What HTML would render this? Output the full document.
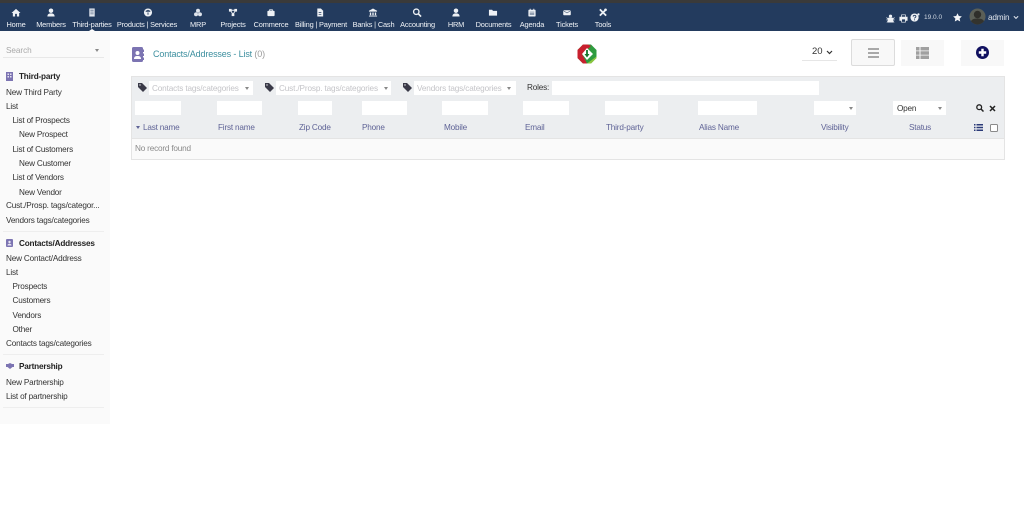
<!DOCTYPE html>
<html><head><meta charset="utf-8"><style>
*{box-sizing:border-box}
html,body{margin:0;padding:0;width:1024px;height:514px;overflow:hidden;background:#fff;font-family:"Liberation Sans",sans-serif;color:#333}
body{filter:blur(.3px)}
.a{position:absolute;white-space:nowrap}
#strip{position:absolute;left:0;top:0;width:1024px;height:3px;background:#3a3a3a}
#bar{position:absolute;left:0;top:3px;width:1024px;height:28px;background:#233b5e}
.n{position:absolute;top:20px;font-size:7.4px;letter-spacing:-.17px;line-height:9px;color:#f0f3f7;transform:translateX(-50%);white-space:nowrap}
.i{position:absolute;top:7.500px;width:9px;height:9px;transform:translateX(-50%);overflow:visible}
#side{position:absolute;left:0;top:31px;width:110px;height:393px;background:#fafafa}
.s{position:absolute;margin-top:1px;font-size:8.2px;letter-spacing:-.19px;line-height:10px;color:#333;white-space:nowrap}
.h{font-weight:bold;color:#222;left:19px}
.hr{position:absolute;left:3px;width:101px;height:1px;background:#eee}
.f{position:absolute;background:#fff}
.th{position:absolute;top:123px;font-size:8.2px;letter-spacing:-.19px;line-height:10px;color:#5f6396;white-space:nowrap}
.ph{position:absolute;margin-top:1px;font-size:8.2px;letter-spacing:-.14px;line-height:10px;color:#c4c4c8;white-space:nowrap}
.tri{position:absolute;width:0;height:0;border-left:2.5px solid transparent;border-right:2.5px solid transparent;border-top:3px solid #888}
</style></head><body>
<div id="strip"></div><div id="bar"></div>

<svg class="i" style="left:16px" viewBox="0 0 10 10"><path d="M5 1L0 5.500h1.500V9.500h2.500V6.500h2V9.500h2.500V5.500H10z" fill="#eef1f5"/></svg>
<svg class="i" style="left:51px" viewBox="0 0 10 10"><circle cx="5" cy="3" r="2.500" fill="#eef1f5"/><path d="M1 9.500C1 6.500 3 6 5 6s4 .5 4 3.500z" fill="#eef1f5"/></svg>
<svg class="i" style="left:92px" viewBox="0 0 10 10"><path d="M2 .5h6v9H2z" fill="#dfe4ec"/><path d="M3.500 2h1v1h-1zM5.500 2h1v1h-1zM3.500 4h1v1h-1zM5.500 4h1v1h-1zM3.500 6h1v1h-1zM5.500 6h1v1h-1z" fill="#233b5e"/></svg>
<svg class="i" style="left:148px" viewBox="0 0 10 10"><circle cx="5" cy="5" r="4.500" fill="#eef1f5"/><path d="M3 3.500l2-1 2 1-2 1zM5 5.500v2" stroke="#233b5e" fill="none"/></svg>
<svg class="i" style="left:198px" viewBox="0 0 10 10"><circle cx="5" cy="3" r="2.200" fill="#dfe4ec"/><circle cx="2.800" cy="7" r="2.200" fill="#dfe4ec"/><circle cx="7.200" cy="7" r="2.200" fill="#dfe4ec"/></svg>
<svg class="i" style="left:233px" viewBox="0 0 10 10"><path d="M2 2.500h6M2 2.500L5 7M8 2.500L5 7" stroke="#eef1f5"/><rect x="0.500" y="1" width="3" height="3" fill="#eef1f5"/><rect x="6.500" y="1" width="3" height="3" fill="#eef1f5"/><rect x="3.500" y="6" width="3" height="3" fill="#eef1f5"/></svg>
<svg class="i" style="left:271px" viewBox="0 0 10 10"><rect x="1" y="3" width="8" height="6" rx="1" fill="#eef1f5"/><path d="M3.500 3.500V2h3v1.500" stroke="#eef1f5" fill="none"/></svg>
<svg class="i" style="left:320px" viewBox="0 0 10 10"><path d="M2 .5h4l2.500 2.500v6.500H2z" fill="#eef1f5"/><path d="M3.500 5h3M3.500 7h3" stroke="#233b5e" stroke-width=".8"/></svg>
<svg class="i" style="left:373px" viewBox="0 0 10 10"><path d="M5 .5L.5 3v1h9V3zM1.500 5h1.500v3H1.500zM4.250 5h1.500v3h-1.500zM7 5h1.500v3H7zM.5 8.500h9v1h-9z" fill="#eef1f5"/></svg>
<svg class="i" style="left:417px" viewBox="0 0 10 10"><circle cx="4.200" cy="4.200" r="3" fill="none" stroke="#eef1f5" stroke-width="1.500"/><path d="M6.500 6.500L9.500 9.500" stroke="#eef1f5" stroke-width="1.800"/></svg>
<svg class="i" style="left:456px" viewBox="0 0 10 10"><circle cx="5" cy="3" r="2.500" fill="#eef1f5"/><path d="M1 9.500C1 6.500 3 6 5 6s4 .5 4 3.500z" fill="#eef1f5"/></svg>
<svg class="i" style="left:493px" viewBox="0 0 10 10"><path d="M.5 2h3.500l1 1.200h4.500v5.300H.5z" fill="#eef1f5"/></svg>
<svg class="i" style="left:532px" viewBox="0 0 10 10"><rect x="1" y="2" width="8" height="7.500" rx=".8" fill="#eef1f5"/><path d="M3 .8v2M7 .8v2" stroke="#eef1f5"/><path d="M2.500 4.500h5M2.500 6h5M2.500 7.500h5" stroke="#233b5e" stroke-width=".5"/></svg>
<svg class="i" style="left:567px" viewBox="0 0 10 10"><rect x=".8" y="2.500" width="8.400" height="5.500" rx=".8" fill="#eef1f5"/><path d="M1 3l4 2.500L9 3" stroke="#233b5e" stroke-width=".6" fill="none"/></svg>
<svg class="i" style="left:603px" viewBox="0 0 10 10"><path d="M1.500 1.500L8.500 8.500M8.500 1.500L1.500 8.500" stroke="#eef1f5" stroke-width="2"/><circle cx="7.800" cy="2" r="1.500" fill="#eef1f5"/></svg>

<div class="n" style="left:16px">Home</div>
<div class="n" style="left:51px">Members</div>
<div class="n" style="left:92px">Third-parties</div>
<div class="n" style="left:147px">Products | Services</div>
<div class="n" style="left:198px">MRP</div>
<div class="n" style="left:233px">Projects</div>
<div class="n" style="left:271px">Commerce</div>
<div class="n" style="left:321px">Billing | Payment</div>
<div class="n" style="left:373.500px">Banks | Cash</div>
<div class="n" style="left:417.500px">Accounting</div>
<div class="n" style="left:456px">HRM</div>
<div class="n" style="left:493.500px">Documents</div>
<div class="n" style="left:532px">Agenda</div>
<div class="n" style="left:567px">Tickets</div>
<div class="n" style="left:603px">Tools</div>
<div class="a" style="left:89px;top:29px;width:0;height:0;border-left:3px solid transparent;border-right:3px solid transparent;border-bottom:2px solid #fff"></div>

<svg class="a" style="left:886px;top:13.500px" width="9" height="9" viewBox="0 0 10 10"><circle cx="5" cy="2.500" r="1.800" fill="#eef1f5"/><path d="M2.500 4.500h5v4.500h-5zM.5 4l2 1.500M9.500 4l-2 1.500M.5 6.500h2M9.500 6.500h-2M1 9.500l1.500-2M9 9.500l-1.500-2" fill="#eef1f5" stroke="#eef1f5" stroke-width=".8"/></svg>
<svg class="a" style="left:898.500px;top:13.500px" width="9" height="9" viewBox="0 0 10 10"><path d="M2.500 3V.5h5V3h2v4.500h-2V9.500h-5V7.500h-2V3z" fill="#eef1f5"/><path d="M3.300 1.300h3.400V3H3.300zM3.300 6h3.400v2.700H3.300z" fill="#233b5e"/></svg>
<svg class="a" style="left:910px;top:13px" width="10" height="9.100" viewBox="0 0 11 10"><circle cx="5" cy="5" r="4.500" fill="#eef1f5"/><circle cx="9.300" cy="1.500" r="1.200" fill="#eef1f5"/><path d="M3.500 4c0-2 3-2 3 0 0 1-1.500 1-1.500 2" stroke="#233b5e" stroke-width="1" fill="none"/><rect x="4.500" y="7" width="1" height="1" fill="#233b5e"/></svg>
<div class="a" style="left:924px;top:13px;font-size:6.500px;line-height:9px;color:#cfd6e0">19.0.0</div>
<svg class="a" style="left:952.500px;top:12.500px" width="9" height="9" viewBox="0 0 10 10"><path d="M5 .3l1.450 3.100 3.400.400-2.500 2.300.650 3.400L5 7.800l-3 1.700.650-3.400-2.500-2.300 3.400-.400z" fill="#f4f6f9"/></svg>
<svg class="a" style="left:969px;top:8px" width="17" height="17" viewBox="0 0 17 17"><defs><clipPath id="c"><circle cx="8.500" cy="8.500" r="8"/></clipPath></defs><circle cx="8.500" cy="8.500" r="8" fill="#5b5f57"/><g clip-path="url(#c)"><circle cx="8.500" cy="6.500" r="3.700" fill="#2f2f2b"/><path d="M1 17c0-5 3-6.500 7.500-6.500S16 12 16 17z" fill="#33332e"/></g></svg>
<div class="a" style="left:988px;top:13px;font-size:8.200px;letter-spacing:-.19px;line-height:10px;color:#dfe4ec">admin</div>
<svg class="a" style="left:1013px;top:15px" width="6" height="5" viewBox="0 0 7 5"><path d="M1 1l2.500 2.500L6 1" stroke="#dfe4ec" stroke-width="1.200" fill="none"/></svg>

<div id="side"></div>
<div class="s" style="left:6px;top:45px;color:#a8a8a8;letter-spacing:-.05px">Search</div>
<div class="tri" style="left:95px;top:49px"></div>
<div class="hr" style="top:57px;background:#e8e8e8"></div>

<svg class="a" style="left:6px;top:72px" width="7" height="9" viewBox="0 0 7 9"><rect width="7" height="9" fill="#7c74b2"/><path d="M1.500 1.500h1.500v1.500H1.500zM4 1.500h1.500v1.500H4zM1.500 4h1.500v1.500H1.500zM4 4h1.500v1.500H4z" fill="#e7e5f2"/></svg>
<div class="s h" style="top:71px">Third-party</div>
<div class="s" style="left:6px;top:87px">New Third Party</div>
<div class="s" style="left:6px;top:101px">List</div>
<div class="s" style="left:12.500px;top:115px">List of Prospects</div>
<div class="s" style="left:19px;top:129px">New Prospect</div>
<div class="s" style="left:12.500px;top:144px">List of Customers</div>
<div class="s" style="left:19px;top:158px">New Customer</div>
<div class="s" style="left:12.500px;top:172px">List of Vendors</div>
<div class="s" style="left:19px;top:187px">New Vendor</div>
<div class="s" style="left:6px;top:200px">Cust./Prosp. tags/categor...</div>
<div class="s" style="left:6px;top:215px">Vendors tags/categories</div>
<div class="hr" style="top:231px"></div>

<svg class="a" style="left:6px;top:239px" width="7" height="8" viewBox="0 0 7 8"><rect width="7" height="8" rx="1" fill="#7c74b2"/><circle cx="3.500" cy="3" r="1.200" fill="#e7e5f2"/><path d="M1.500 6.500c0-1.500 1-1.800 2-1.800s2 .3 2 1.800z" fill="#e7e5f2"/></svg>
<div class="s h" style="top:238px">Contacts/Addresses</div>
<div class="s" style="left:6px;top:253px">New Contact/Address</div>
<div class="s" style="left:6px;top:267px">List</div>
<div class="s" style="left:12.500px;top:281px">Prospects</div>
<div class="s" style="left:12.500px;top:295px">Customers</div>
<div class="s" style="left:12.500px;top:310px">Vendors</div>
<div class="s" style="left:12.500px;top:324px">Other</div>
<div class="s" style="left:6px;top:338px">Contacts tags/categories</div>
<div class="hr" style="top:354px"></div>

<svg class="a" style="left:6px;top:363px" width="8" height="6" viewBox="0 0 8 6"><path d="M0 1h2l2-1 2 1h2v3H6.500L4 6 1.500 4H0z" fill="#7c74b2"/></svg>
<div class="s h" style="top:361px">Partnership</div>
<div class="s" style="left:6px;top:377px">New Partnership</div>
<div class="s" style="left:6px;top:391px">List of partnership</div>
<div class="hr" style="top:407px"></div>

<svg class="a" style="left:132px;top:47px" width="12" height="15" viewBox="0 0 12 15"><rect width="11" height="15" rx="1.500" fill="#7c74b2"/><rect x="11" y="2.500" width="1" height="2.500" fill="#7c74b2"/><rect x="11" y="6.500" width="1" height="2.500" fill="#7c74b2"/><rect x="11" y="10.500" width="1" height="2.500" fill="#7c74b2"/><circle cx="5.500" cy="6" r="2" fill="#fff"/><path d="M2 12c0-2.500 1.500-3 3.500-3s3.500.5 3.500 3z" fill="#fff"/></svg>
<div class="a" style="left:153px;top:48px;font-size:9px;letter-spacing:-.14px;line-height:12px;color:#3d8f9f">Contacts/Addresses - List <span style="color:#9a9a9a">(0)</span></div>

<svg class="a" style="left:577px;top:44px" width="20" height="20" viewBox="0 0 20 20"><path d="M6 .5h8L19.500 6v8L14 19.500H6L.5 14V6z" fill="#2e9c3f"/><path d="M6 .5h5l3 1.500-9 8 5 9.500H6L.5 14V6z" fill="#c8202e"/><path d="M10 19.500l9.500-7V14L14 19.500z" fill="#8cc63f"/><path d="M10 4l6 6-6 6-5-6z" fill="#fff"/><path d="M9.100 6h1.800v4h1.600L10 13.500 7.500 10h1.600z" fill="#12762a"/></svg>

<div class="a" style="left:812px;top:46px;font-size:9.500px;line-height:12px;color:#333">20</div>
<svg class="a" style="left:826px;top:50px" width="7" height="5" viewBox="0 0 7 5"><path d="M1 1l2.500 2.500L6 1" stroke="#333" stroke-width="1.200" fill="none"/></svg>
<div class="a" style="left:802px;top:60px;width:35px;height:1px;background:#e6e6e6"></div>

<div class="a" style="left:851px;top:39px;width:44px;height:27px;background:#f8f8f8;border:1px solid #dcdcdc;border-radius:2px"></div>
<div class="a" style="left:868px;top:47.500px;width:11px;height:2px;background:#a8a8a8"></div>
<div class="a" style="left:868px;top:51.500px;width:11px;height:2px;background:#a8a8a8"></div>
<div class="a" style="left:868px;top:55.500px;width:11px;height:2px;background:#a8a8a8"></div>

<div class="a" style="left:901px;top:40px;width:43px;height:26px;background:#f8f8f8"></div>
<svg class="a" style="left:916px;top:47px" width="13" height="12" viewBox="0 0 13 12"><path d="M0 0h3.500v3.500H0zM4.500 0H13v3.500H4.500zM0 4.300h3.500v3.500H0zM4.500 4.300H13v3.500H4.500zM0 8.500h3.500V12H0zM4.500 8.500H13V12H4.500z" fill="#a0a0a0"/></svg>

<div class="a" style="left:961px;top:40px;width:43px;height:26px;background:#f8f8f8"></div>
<svg class="a" style="left:976px;top:46px" width="13" height="13" viewBox="0 0 13 13"><circle cx="6.500" cy="6.500" r="6.500" fill="#10105f"/><path d="M5.300 2.800h2.400v2.500h2.500v2.400H7.700v2.500H5.300V7.700H2.800V5.300h2.500z" fill="#fff"/></svg>

<div class="a" style="left:131px;top:76px;width:874px;height:84px;border:1px solid #e4e4e4;background:#fff"></div>
<div class="a" style="left:132px;top:77px;width:872px;height:61px;background:#eceef0"></div>
<div class="a" style="left:132px;top:138px;width:872px;height:1px;background:#e4e4e4"></div>
<div class="a" style="left:132px;top:139px;width:872px;height:20px;background:#fafafa"></div>
<div class="a" style="left:135px;top:144px;font-size:8.200px;letter-spacing:-.19px;line-height:10px;color:#8a8a8a">No record found</div>

<svg class="a" style="left:138px;top:83px" width="9" height="9" viewBox="0 0 9 9"><path d="M0 0h4l5 5-4 4-5-5z" fill="#3a3a48"/><circle cx="2" cy="2" r=".7" fill="#eceef0"/></svg>
<div class="f" style="left:149px;top:81px;width:104px;height:14px"></div>
<div class="ph" style="left:152px;top:83px">Contacts tags/categories</div>
<div class="tri" style="left:245px;top:87px"></div>

<svg class="a" style="left:265px;top:83px" width="9" height="9" viewBox="0 0 9 9"><path d="M0 0h4l5 5-4 4-5-5z" fill="#3a3a48"/><circle cx="2" cy="2" r=".7" fill="#eceef0"/></svg>
<div class="f" style="left:276px;top:81px;width:115px;height:14px"></div>
<div class="ph" style="left:279px;top:83px">Cust./Prosp. tags/categories</div>
<div class="tri" style="left:384px;top:87px"></div>

<svg class="a" style="left:403px;top:83px" width="9" height="9" viewBox="0 0 9 9"><path d="M0 0h4l5 5-4 4-5-5z" fill="#3a3a48"/><circle cx="2" cy="2" r=".7" fill="#eceef0"/></svg>
<div class="f" style="left:414px;top:81px;width:102px;height:14px"></div>
<div class="ph" style="left:417px;top:83px">Vendors tags/categories</div>
<div class="tri" style="left:507px;top:87px"></div>

<div class="s" style="left:527px;top:82px">Roles:</div>
<div class="f" style="left:552px;top:81px;width:267px;height:14px"></div>

<div class="f" style="left:135px;top:101px;width:46px;height:14px"></div>
<div class="f" style="left:217px;top:101px;width:45px;height:14px"></div>
<div class="f" style="left:298px;top:101px;width:34px;height:14px"></div>
<div class="f" style="left:362px;top:101px;width:45px;height:14px"></div>
<div class="f" style="left:442px;top:101px;width:46px;height:14px"></div>
<div class="f" style="left:523px;top:101px;width:46px;height:14px"></div>
<div class="f" style="left:605px;top:101px;width:53px;height:14px"></div>
<div class="f" style="left:698px;top:101px;width:59px;height:14px"></div>
<div class="f" style="left:814px;top:101px;width:42px;height:14px"></div>
<div class="tri" style="left:849px;top:107px"></div>
<div class="f" style="left:893px;top:101px;width:53px;height:14px"></div>
<div class="s" style="left:897px;top:103px">Open</div>
<div class="tri" style="left:938px;top:107px"></div>

<svg class="a" style="left:976px;top:104px" width="8" height="8" viewBox="0 0 8 8"><circle cx="3.200" cy="3.200" r="2.400" fill="none" stroke="#222" stroke-width="1.300"/><path d="M5 5l2.500 2.500" stroke="#222" stroke-width="1.500"/></svg>
<svg class="a" style="left:989px;top:105px" width="7" height="7" viewBox="0 0 7 7"><path d="M1 1l5 5M6 1L1 6" stroke="#222" stroke-width="1.500"/></svg>

<div class="tri" style="left:136px;top:126px;border-top-color:#5f6396"></div>
<div class="th" style="left:143px">Last name</div>
<div class="th" style="left:218px">First name</div>
<div class="th" style="left:299px">Zip Code</div>
<div class="th" style="left:362px">Phone</div>
<div class="th" style="left:444px">Mobile</div>
<div class="th" style="left:525px">Email</div>
<div class="th" style="left:606px">Third-party</div>
<div class="th" style="left:699px">Alias Name</div>
<div class="th" style="left:821px">Visibility</div>
<div class="th" style="left:909px">Status</div>

<svg class="a" style="left:974px;top:124px" width="9" height="7" viewBox="0 0 9 7"><path d="M0 0h1.500v1.500H0zM2.500 0H9v1.500H2.500zM0 2.750h1.500v1.500H0zM2.500 2.750H9v1.500H2.500zM0 5.500h1.500V7H0zM2.500 5.500H9V7H2.500z" fill="#2a3a78"/></svg>
<div class="a" style="left:990px;top:124px;width:7.500px;height:7.500px;border:1px solid #8a8a8a;border-radius:1.500px;background:#fff"></div>
</body></html>
